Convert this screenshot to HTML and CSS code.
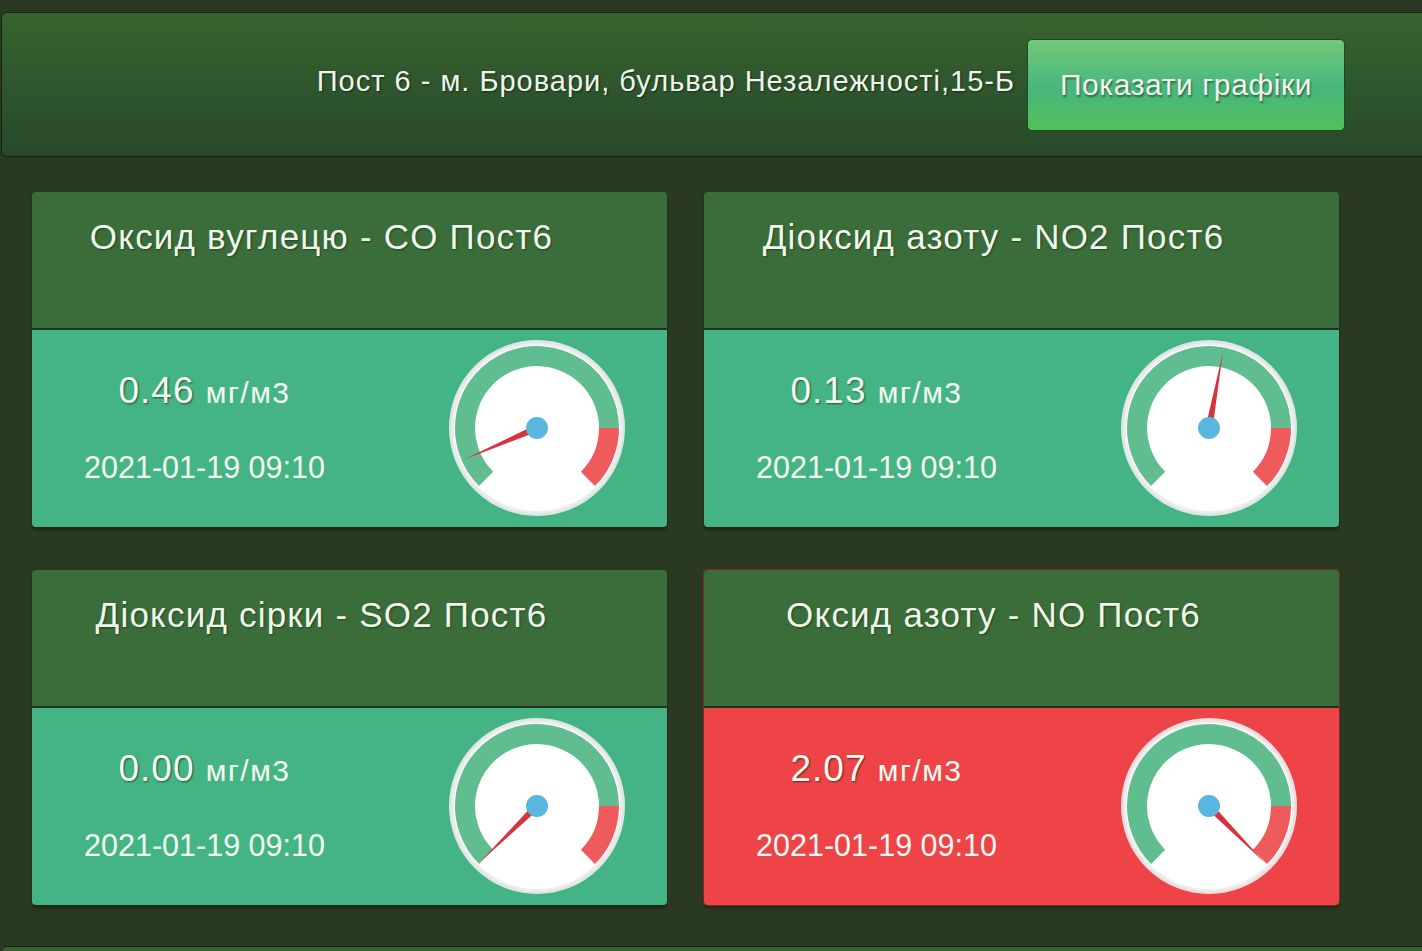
FILE: index.html
```html
<!DOCTYPE html>
<html lang="uk">
<head>
    <meta charset="UTF-8">
    <meta name="viewport" content="width=device-width, initial-scale=1.0">
    <title>Пост 6 - Моніторинг повітря</title>
    <link rel="stylesheet" href="styles.css">
</head>
<body>
    <!-- shared dial face, each gauge adds its own needle -->
    <svg class="defs" width="0" height="0">
        <symbol id="dial" viewBox="0 0 180 180">
            <circle cx="90" cy="90" r="85.5" fill="#fff" stroke="rgba(236,236,236,0.92)" stroke-width="5" />
            <path d="M39.09 140.91 A72 72 0 1 1 162 90" fill="none" stroke="#60bd90" stroke-width="20" />
            <path d="M162 90 A72 72 0 0 1 140.91 140.91" fill="none" stroke="#ef5a5c" stroke-width="20" />
        </symbol>
    </svg>

    <div class="panel">
        <span class="post-name">Пост 6 - м. Бровари, бульвар Незалежності,15-Б</span>
        <button class="btn-charts">Показати графіки</button>
    </div>

    <div class="cards">
        <div class="card">
            <div class="card-title">Оксид вуглецю - CO Пост6</div>
            <div class="card-body">
                <div class="reading">
                    <div class="value">0.46 <span class="unit">мг/м3</span></div>
                    <div class="date">2021-01-19 09:10</div>
                </div>
                <svg class="gauge" viewBox="0 0 180 180">
                    <use href="#dial" />
                    <polygon class="needle" points="0,-3.5 80,0 0,3.5" transform="translate(90 90) rotate(156.6)" />
                    <circle class="hub" cx="90" cy="90" r="11" />
                </svg>
            </div>
        </div>

        <div class="card">
            <div class="card-title">Діоксид азоту - NO2 Пост6</div>
            <div class="card-body">
                <div class="reading">
                    <div class="value">0.13 <span class="unit">мг/м3</span></div>
                    <div class="date">2021-01-19 09:10</div>
                </div>
                <svg class="gauge" viewBox="0 0 180 180">
                    <use href="#dial" />
                    <polygon class="needle" points="0,-3.5 77,0 0,3.5" transform="translate(90 90) rotate(-79.6)" />
                    <circle class="hub" cx="90" cy="90" r="11" />
                </svg>
            </div>
        </div>

        <div class="card">
            <div class="card-title">Діоксид сірки - SO2 Пост6</div>
            <div class="card-body">
                <div class="reading">
                    <div class="value">0.00 <span class="unit">мг/м3</span></div>
                    <div class="date">2021-01-19 09:10</div>
                </div>
                <svg class="gauge" viewBox="0 0 180 180">
                    <use href="#dial" />
                    <polygon class="needle" points="0,-3.5 80,0 0,3.5" transform="translate(90 90) rotate(135.5)" />
                    <circle class="hub" cx="90" cy="90" r="11" />
                </svg>
            </div>
        </div>

        <div class="card alert">
            <div class="card-title">Оксид азоту - NO Пост6</div>
            <div class="card-body">
                <div class="reading">
                    <div class="value">2.07 <span class="unit">мг/м3</span></div>
                    <div class="date">2021-01-19 09:10</div>
                </div>
                <svg class="gauge" viewBox="0 0 180 180">
                    <use href="#dial" />
                    <polygon class="needle" points="0,-3.5 80,0 0,3.5" transform="translate(90 90) rotate(45.5)" />
                    <circle class="hub" cx="90" cy="90" r="11" />
                </svg>
            </div>
        </div>
    </div>

    <div class="panel"></div>
</body>
</html>
```

FILE: styles.css
```css
body {
    margin: 0;
    background-color: #2a3a22;
    font-family: "Liberation Sans", Arial, sans-serif;
    overflow: hidden;
}
.defs {
    position: absolute;
}
.panel {
    display: flex;
    align-items: center;
    justify-content: flex-end;
    height: 143px;
    margin: 12px -12px 0 1px;
    padding-right: 88px;
    border: 1px solid #15230f;
    border-radius: 6px;
    background: linear-gradient(#37632f, #27492a);
}
.post-name {
    margin: 0 12px 6px 0;
    font-size: 29px;
    letter-spacing: 1px;
    color: #eef5ec;
    text-shadow: 1px 1px 2px rgba(0, 0, 0, 0.5);
}
.btn-charts {
    width: 318px;
    height: 92px;
    border: 1px solid #1d4a1f;
    border-radius: 5px;
    background: linear-gradient(#72c979, #47b67d 55%, #55c05a);
    font-family: inherit;
    font-size: 30px;
    letter-spacing: 0.6px;
    color: #f2f7ee;
    text-shadow: 1px 2px 2px rgba(0, 0, 0, 0.45);
}
.cards {
    display: grid;
    grid-template-columns: 635px 635px;
    column-gap: 37px;
    row-gap: 43px;
    padding: 35px 0 0 32px;
}
.cards + .panel {
    margin-top: 41px;
}
.card {
    border-radius: 4px;
    overflow: hidden;
    box-shadow: 0 3px 3px rgba(0, 0, 0, 0.35);
}
.card-title {
    height: 111px;
    padding: 25px 56px 0 0;
    border-bottom: 2px solid #1c381b;
    background-color: #3b6d3a;
    font-size: 35px;
    line-height: 40px;
    letter-spacing: 1.2px;
    text-align: center;
    color: #eef8ea;
    text-shadow: 1px 1px 2px rgba(0, 0, 0, 0.4);
}
.card-body {
    display: flex;
    height: 189px;
    padding-top: 8px;
    background-color: #45b484;
}
.alert {
    box-shadow: 0 0 0 1px #7e2a23, 0 3px 3px rgba(0, 0, 0, 0.35);
}
.alert .card-body {
    background-color: #ef4447;
}
.reading {
    width: 345px;
    text-align: center;
    color: #f4fbf2;
}
.value {
    margin-top: 33px;
    font-size: 37px;
    line-height: 40px;
    letter-spacing: 1px;
    text-shadow: 1px 1px 2px rgba(0, 0, 0, 0.55);
}
.unit {
    font-size: 30px;
    letter-spacing: 1.5px;
    text-shadow: none;
}
.date {
    margin-top: 37px;
    font-size: 30.5px;
    line-height: 34px;
}
.gauge {
    width: 180px;
    height: 180px;
    margin-left: 70px;
}
.needle {
    fill: #d8333d;
}
.hub {
    fill: #5bb6df;
}
```
